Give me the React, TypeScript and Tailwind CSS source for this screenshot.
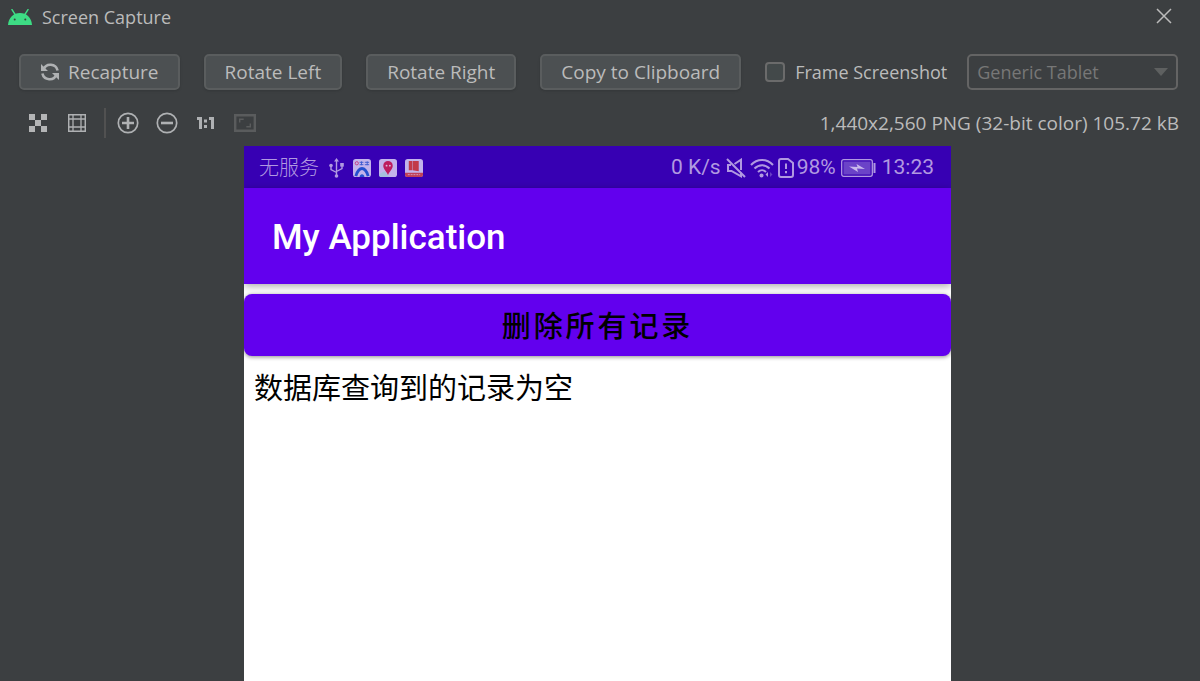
import { useState } from "react";
import type { ReactNode } from "react";

interface ToolButtonProps {
  label: string;
  disabled?: boolean;
  children: ReactNode;
}

const ToolButton: React.FC<ToolButtonProps> = ({
  label,
  disabled,
  children,
}) => (
  <button
    type="button"
    aria-label={label}
    title={label}
    disabled={disabled}
    className="flex h-6 w-6 items-center justify-center"
  >
    {children}
  </button>
);

const actionClass =
  "flex h-9 items-center justify-center gap-2 rounded-[5px] border-2 border-[#5a5d5e] bg-[#4c5052] px-[19px] text-[19px] whitespace-nowrap text-[#bbbbbb] shadow-sm";

const AndroidLogo = () => (
  <svg width="24" height="16" viewBox="0 0 24 16" aria-hidden="true">
    <path d="M4 .7l3.200 5M20 .7l-3.200 5" stroke="#3ddc84" strokeWidth="1.500" strokeLinecap="round" />
    <path d="M0 16C.5 8.500 5.500 4 12 4S23.500 8.500 24 16z" fill="#3ddc84" />
    <circle cx="6.700" cy="10.500" r="1" fill="#3c3f41" />
    <circle cx="17.300" cy="10.500" r="1" fill="#3c3f41" />
  </svg>
);

const RefreshIcon = () => (
  <svg width="20" height="20" viewBox="0 0 20 20" fill="none" aria-hidden="true">
    <path d="M3.500 7.500A7.400 7.400 0 0 1 17.600 8.500M16.500 12.500A7.400 7.400 0 0 1 2.400 11.500" stroke="#afb1b3" strokeWidth="2.600" />
    <path d="M1 2v7h7zM19 18v-7h-7z" fill="#afb1b3" />
  </svg>
);

const TitleBar = () => (
  <header className="flex h-[34px] items-center gap-2 pr-6 pl-2">
    <AndroidLogo />
    <h1 className="flex-1 pl-0.5 text-lg">Screen Capture</h1>
    <button type="button" aria-label="Close">
      <svg width="24" height="24" viewBox="0 0 24 24" fill="none">
        <path d="M5 4l14 14M19 4L5 18" stroke="#bbbbbb" strokeWidth="1.500" />
      </svg>
    </button>
  </header>
);

const ActionBar = () => {
  const [framed, setFramed] = useState<boolean>(false);

  return (
    <div className="flex items-center gap-6 pr-[22px] pl-[19px]">
      <button type="button" className={actionClass}>
        <RefreshIcon />
        Recapture
      </button>
      <button type="button" className={actionClass}>
        Rotate Left
      </button>
      <button type="button" className={actionClass}>
        Rotate Right
      </button>
      <button type="button" className={actionClass}>
        Copy to Clipboard
      </button>
      <div className="flex flex-1 items-center gap-5">
        <label className="flex items-center gap-2.5 text-lg whitespace-nowrap">
          <input
            type="checkbox"
            checked={framed}
            onChange={(e) => setFramed(e.target.checked)}
            className="h-5 w-5 appearance-none rounded-sm border-2 border-[#6b6b6b] bg-[#43494a] checked:bg-[#6b6b6b]"
          />
          Frame Screenshot
        </label>
        <div className="relative flex-1">
          <select
            aria-label="Device frame"
            disabled={!framed}
            className="h-9 w-full appearance-none rounded-[5px] border-2 border-[#646464] px-2 text-lg text-[#bbbbbb] disabled:text-[#777777] disabled:opacity-100"
          >
            <option>Generic Tablet</option>
          </select>
          <svg
            width="14"
            height="8"
            viewBox="0 0 14 8"
            className="pointer-events-none absolute top-3.5 right-2.5"
            aria-hidden="true"
          >
            <path d="M0 0h14L7 8z" fill="#5e6060" />
          </svg>
        </div>
      </div>
    </div>
  );
};

const ViewBar = () => (
  <div className="flex h-14 items-center justify-between pt-2.5 pr-[21px] pl-[26px]">
    <div className="flex items-center gap-[15px]">
      <ToolButton label="Show chessboard">
        <svg width="18" height="18" viewBox="0 0 18 18" fill="#b4b5b6">
          <path d="M0 0h6v6H0zM12 0h6v6h-6zM6 6h6v6H6zM0 12h6v6H0zM12 12h6v6h-6z" />
        </svg>
      </ToolButton>
      <ToolButton label="Show grid">
        <svg width="18" height="18" viewBox="0 0 18 18" fill="none" stroke="#afb1b3">
          <path d="M.7.700h16.600v16.600H.7z" strokeWidth="1.500" />
          <path d="M5 1v16M13 1v16M1 5h16M1 13h16" strokeWidth="1.300" />
        </svg>
      </ToolButton>
      <div className="flex items-center gap-2.5 border-l-2 border-[#515151] py-[3px] pl-2.5">
        <ToolButton label="Zoom in">
          <svg width="22" height="22" viewBox="0 0 22 22" fill="none" stroke="#afb1b3">
            <circle cx="11" cy="11" r="9.700" strokeWidth="1.700" />
            <path d="M5 11h12M11 5v12" strokeWidth="2.600" />
          </svg>
        </ToolButton>
      </div>
      <ToolButton label="Zoom out">
        <svg width="22" height="22" viewBox="0 0 22 22" fill="none" stroke="#afb1b3">
          <circle cx="11" cy="11" r="9.700" strokeWidth="1.700" />
          <path d="M5 11h12" strokeWidth="2.600" />
        </svg>
      </ToolButton>
      <ToolButton label="Actual size">
        <svg width="18" height="14" viewBox="0 0 18 14" fill="#afb1b3">
          <path d="M0 1h5v12H2V4H0zM12 1h5v12h-3V4h-2zM7 3.500h3v3H7zM7 9h3v3H7z" />
        </svg>
      </ToolButton>
      <ToolButton label="Fit to window" disabled>
        <svg width="22" height="18" viewBox="0 0 22 18" fill="none" stroke="#5a5c5d">
          <path d="M1.200 1.200h19.600v15.600H1.200z" strokeWidth="2.400" />
          <path d="M5.700 8.500V5.200h4M16.300 9.500v3.300h-4" strokeWidth="1.400" />
        </svg>
      </ToolButton>
    </div>
    <p className="text-[19px]">1,440x2,560 PNG (32-bit color) 105.72 kB</p>
  </div>
);

const StatusBar = () => (
  <div className="flex h-[42px] items-center justify-between bg-[#3700b3] pt-0.5 pr-[17px] pl-[15px] font-['Roboto','Noto_Sans_CJK_SC',sans-serif] text-[21px] text-[#b199e1]">
    <div className="flex items-center gap-2">
      <span className="text-xl font-light">无服务</span>
      <svg width="18" height="22" viewBox="0 0 18 22" fill="none" stroke="currentColor" strokeWidth="1.400" aria-hidden="true">
        <path d="M9.500 3v15M4 10v2.500l5.500 3M15 8v3.500l-5.500 3" />
        <path d="M9.500 1l2.500 3.500H7z" fill="currentColor" stroke="none" />
        <circle cx="9.500" cy="19" r="1.800" fill="currentColor" stroke="none" />
        <circle cx="4" cy="8.500" r="1.800" fill="currentColor" stroke="none" />
        <path d="M13.200 6h3.600v3.600h-3.600z" fill="currentColor" stroke="none" />
      </svg>
      <svg width="18" height="18" viewBox="0 0 19 19" aria-hidden="true">
        <rect width="19" height="19" rx="3" fill="#c3b3eb" />
        <path d="M3 18c1.500-5 3-8 6.500-8s5 3 6.500 8" fill="none" stroke="#2550cf" strokeWidth="3" />
        <path d="M7 19c0-4 5-4 5 0z" fill="#2550cf" />
        <circle cx="4" cy="4.500" r="1.700" fill="none" stroke="#c33c83" />
        <path d="M7 3.500h4M7 6h4M12.500 3.500H17M12.500 6H17M9 2.500v4M15 2.500v4" stroke="#3d5bd0" />
      </svg>
      <svg width="18" height="18" viewBox="0 0 19 19" aria-hidden="true">
        <rect width="19" height="19" rx="3" fill="#c3b3eb" />
        <path d="M0 16l6-3 5 6H3a3 3 0 0 1-3-3z" fill="#a5c0de" />
        <path d="M9.500 17C8 13 4.500 10.500 4.500 7a5 5 0 0 1 10 0c0 3.500-3.500 6-5 10z" fill="#bd1d5f" />
        <circle cx="8" cy="7" r="1" fill="#dcb8de" />
        <circle cx="11.500" cy="7" r="1" fill="#dcb8de" />
      </svg>
      <svg width="18" height="18" viewBox="0 0 19 19" aria-hidden="true">
        <rect width="19" height="19" rx="3" fill="#c3b3eb" />
        <path d="M4 2h3.500v10H4zM8 2h6.500v11L8 12z" fill="#c23a4a" />
        <path d="M0 14.500h19V16a3 3 0 0 1-3 3H3a3 3 0 0 1-3-3z" fill="#c04058" />
        <path d="M3 16.500h13" stroke="#d69bc0" strokeDasharray="2 1" />
      </svg>
    </div>
    <div className="flex items-center gap-[5px]">
      <span>0 K/s</span>
      <div className="flex items-center gap-1">
        <svg width="20" height="20" viewBox="0 0 20 20" fill="none" stroke="currentColor" strokeWidth="2" aria-hidden="true">
          <path d="M1 1l18 18M8.500 6L15 1.700V12M5 7H2v6h3.500l9.500 5.300v-4" />
        </svg>
        <svg width="24" height="20" viewBox="0 0 24 20" fill="none" stroke="currentColor" strokeWidth="2" aria-hidden="true">
          <path d="M1 7C7 .3 17 .3 23 7M4.500 10.500c4.500-4.500 10.500-4.500 15 0M8 14c2.500-2.500 5.500-2.500 8 0" />
          <circle cx="11.500" cy="17.500" r="2" fill="currentColor" stroke="none" />
          <path d="M18 14v5l-2.500-2.500z" fill="currentColor" stroke="none" />
          <path d="M20 14v5l2.500-2.500z" fill="currentColor" stroke="none" opacity=".4" />
        </svg>
        <div className="flex items-center gap-[3px]">
          <svg width="16" height="20" viewBox="0 0 16 20" fill="none" stroke="currentColor" strokeWidth="2" aria-hidden="true">
            <path d="M3 1h7l5 4v12a2 2 0 0 1-2 2H3a2 2 0 0 1-2-2V3a2 2 0 0 1 2-2z" />
            <path d="M8 5.500v5.500M8 13v2.200" />
          </svg>
          <span>98%</span>
        </div>
      </div>
      <svg width="36" height="18" viewBox="0 0 36 18" aria-hidden="true">
        <rect x=".7" y=".7" width="30.600" height="16.600" rx="2" fill="none" stroke="currentColor" strokeWidth="1.300" />
        <rect x="2.500" y="2.500" width="27" height="13" fill="#6b43c8" />
        <path d="M8 7.500l8.500.5-1-3L24 10l-8-.5 1 3.500z" fill="#c9b8ec" />
        <path d="M33.500 4v10" stroke="currentColor" strokeWidth="2" />
      </svg>
      <span>13:23</span>
    </div>
  </div>
);

const DeviceScreen = () => (
  <section
    aria-label="Captured screen"
    className="flex w-[707px] max-w-full flex-1 flex-col overflow-hidden bg-white font-['Roboto','Noto_Sans_CJK_SC',sans-serif] text-black"
  >
    <StatusBar />
    <div className="flex h-24 items-center bg-[#6200ee] px-7 pt-1 shadow-[0_2px_8px_rgba(0,0,0,0.35)]">
      <h2 className="text-[35px] font-medium text-white">My Application</h2>
    </div>
    <button
      type="button"
      className="mt-2.5 h-[62px] rounded-lg bg-[#6200ee] pt-1.5 text-[29px] font-medium tracking-widest shadow-[0_1px_4px_rgba(0,0,0,0.45)]"
    >
      删除所有记录
    </button>
    <p className="px-2.5 pt-3 text-[29px]">数据库查询到的记录为空</p>
  </section>
);

export default function App() {
  return (
    <div className="flex min-h-screen flex-col bg-[#3c3f41] font-['Open_Sans','Noto_Sans',sans-serif] text-[#bbbbbb]">
      <TitleBar />
      <div className="pt-5">
        <ActionBar />
      </div>
      <ViewBar />
      <main className="flex flex-1 flex-col items-center pr-[5px]">
        <DeviceScreen />
      </main>
    </div>
  );
}
